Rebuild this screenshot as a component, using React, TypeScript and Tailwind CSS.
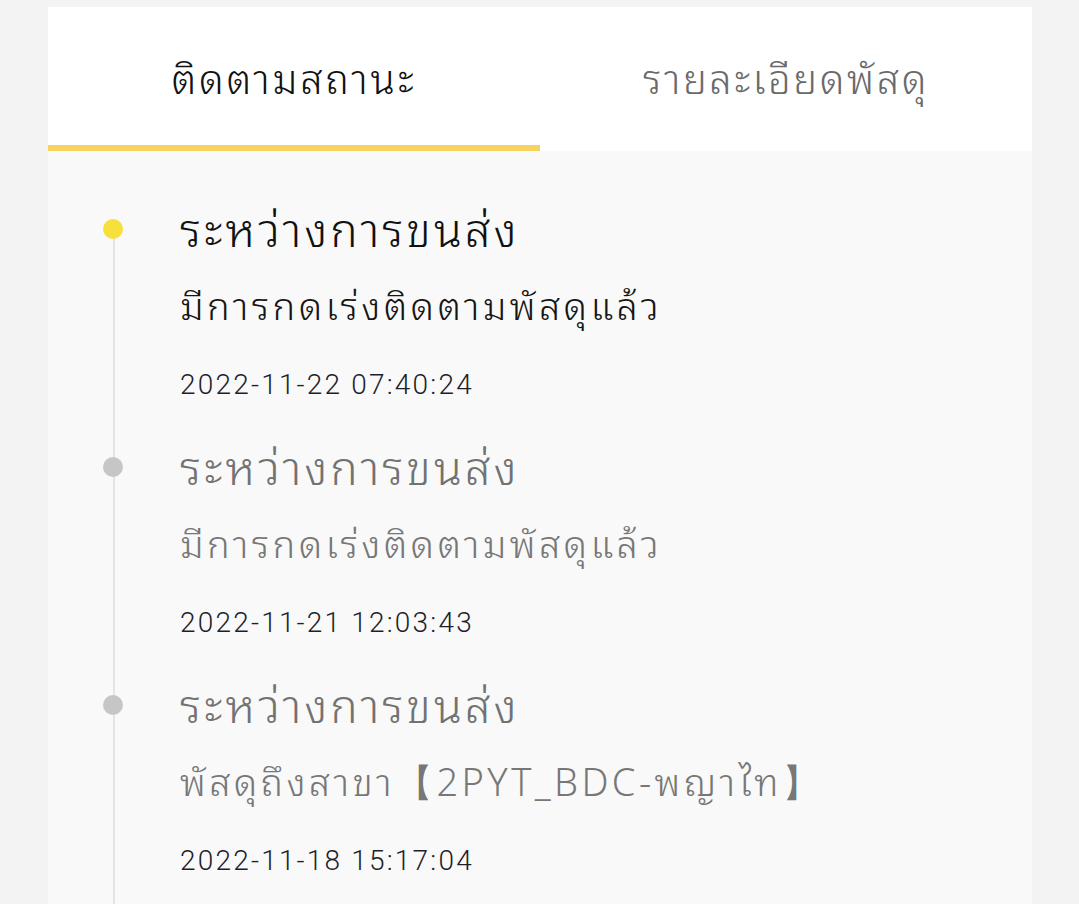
const events = [
  { title: 'ระหว่างการขนส่ง', detail: 'มีการกดเร่งติดตามพัสดุแล้ว', time: '2022-11-22 07:40:24', active: true },
  { title: 'ระหว่างการขนส่ง', detail: 'มีการกดเร่งติดตามพัสดุแล้ว', time: '2022-11-21 12:03:43', active: false },
  { title: 'ระหว่างการขนส่ง', detail: 'พัสดุถึงสาขา【2PYT_BDC-พญาไท】', time: '2022-11-18 15:17:04', active: false },
];

export default function App() {
  return (
    <div
      className="min-h-screen bg-[#f3f3f3] pt-[7px] px-[48px]"
      style={{ fontFamily: '"Noto Sans Thai Looped", "Noto Sans Thai", "Noto Sans", Roboto, sans-serif' }}
    >
      <div className="w-[984px] overflow-hidden">
        <div className="flex h-[138px] bg-white">
          <div className="flex w-1/2 items-center justify-center">
            <span className="text-[40px] font-[350] tracking-[2.8px] text-[#111111]">ติดตามสถานะ</span>
          </div>
          <div className="flex w-1/2 items-center justify-center">
            <span className="text-[40px] font-[350] tracking-[2.6px] text-[#6a6a6a]">รายละเอียดพัสดุ</span>
          </div>
        </div>
        <div className="flex bg-white">
          <div className="h-[6px] w-1/2 bg-[#f6d35c]" />
        </div>

        <div className="h-[760px] bg-[#f9f9f9] pt-[47px]">
          {events.map((e, i) => (
            <div key={i} className="flex">
              <div className="relative w-[132px] shrink-0">
                <div
                  className={`absolute bottom-0 left-[65px] w-[2px] bg-[#e4e4e4] ${i === 0 ? 'top-[31px]' : 'top-0'}`}
                />
                <div
                  className={`absolute left-[55px] top-[21px] h-[20px] w-[20px] rounded-full ${e.active ? 'bg-[#f8e03c]' : 'bg-[#c6c6c6]'}`}
                />
              </div>
              <div className="flex flex-col pb-[31px]">
                <div className={`text-[46px] font-[350] leading-[56px] tracking-[3px] ${e.active ? 'text-[#111111]' : 'text-[#727272]'}`}>
                  {e.title}
                </div>
                <div className={`mt-[21px] text-[38px] font-[350] leading-[56px] tracking-[3.4px] ${e.active ? 'text-[#151515]' : 'text-[#777777]'}`}>
                  {e.detail}
                </div>
                <div
                  className="mt-[34px] text-[28px] font-light leading-[40px] tracking-[2.2px] text-[#1e1e2c]"
                  style={{ fontFamily: 'Roboto, "Noto Sans", sans-serif' }}
                >
                  {e.time}
                </div>
              </div>
            </div>
          ))}
        </div>
      </div>
    </div>
  );
}
